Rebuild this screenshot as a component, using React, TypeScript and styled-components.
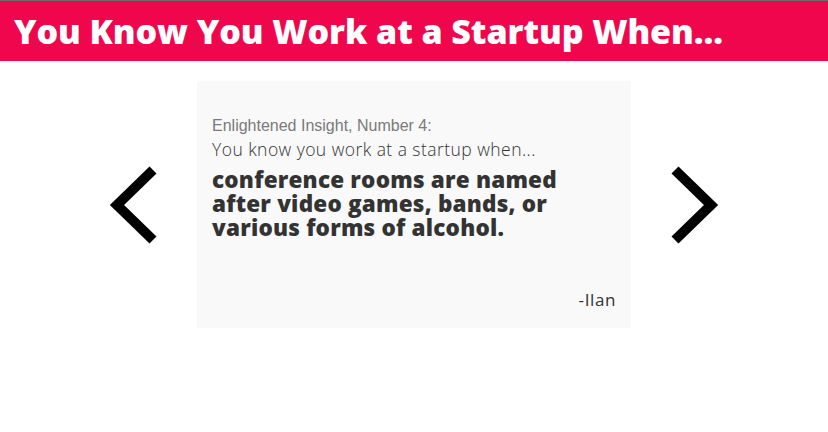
import React from "react";
import styled, { createGlobalStyle } from "styled-components";

const Global = createGlobalStyle`
  html, body { margin: 0; padding: 0; background: #ffffff; }
  body { font-family: "Liberation Sans", Arial, sans-serif; }
`;

const Page = styled.div`
  width: 828px;
  min-height: 432px;
  background: #ffffff;
`;

const Header = styled.header`
  border-top: 1px solid #6b6b6b;
  background: #f0064d;
  height: 60px;
  display: flex;
  align-items: center;
  padding-left: 14px;
`;

const Title = styled.h1`
  margin: 0;
  color: #ffffff;
  font-family: "Open Sans", Lato, sans-serif;
  font-weight: 800;
  font-size: 34px;
  letter-spacing: -0.08px;
  line-height: 1;
`;

const Stage = styled.main`
  display: flex;
  justify-content: center;
  align-items: center;
  gap: 40px;
  padding-top: 20px;
`;

const Arrow = styled.button`
  border: 0;
  background: none;
  padding: 0;
  width: 48px;
  height: 78px;
  display: block;
  cursor: pointer;
  svg { display: block; }
`;

const Card = styled.article`
  box-sizing: border-box;
  width: 434px;
  height: 247px;
  background: #f9f9f9;
  padding: 35px 15px 0;
  display: flex;
  flex-direction: column;
`;

const Kicker = styled.div`
  font-family: "Liberation Sans", Arial, sans-serif;
  font-size: 16px;
  color: #7a7a7a;
  line-height: 20px;
`;

const Lead = styled.div`
  font-family: "Open Sans", Lato, sans-serif;
  font-weight: 300;
  font-size: 17.5px;
  letter-spacing: 0.45px;
  color: #333333;
  line-height: 22px;
  margin-top: 2px;
`;

const Quote = styled.p`
  margin: 8px 0 0;
  font-family: "Open Sans", Lato, sans-serif;
  font-weight: 800;
  font-size: 22.5px;
  letter-spacing: 0.2px;
  color: #333333;
  line-height: 24px;
  max-width: 370px;
`;

const Author = styled.div`
  margin-top: auto;
  margin-bottom: 17px;
  align-self: flex-end;
  font-family: "Open Sans", Lato, sans-serif;
  font-weight: 400;
  font-size: 17px;
  letter-spacing: 0.6px;
  color: #333333;
`;

const Chevron = ({ dir }: { dir: "left" | "right" }) => (
  <svg width="48" height="78" viewBox="0 0 48 78">
    <polyline
      points={dir === "left" ? "44,4 8,39 44,74" : "4,4 40,39 4,74"}
      fill="none"
      stroke="#000"
      strokeWidth="10"
      strokeLinejoin="miter"
    />
  </svg>
);

export default function App() {
  return (
    <Page>
      <Global />
      <Header>
        <Title>You Know You Work at a Startup When...</Title>
      </Header>
      <Stage>
        <Arrow aria-label="Previous">
          <Chevron dir="left" />
        </Arrow>
        <Card>
          <Kicker>Enlightened Insight, Number 4:</Kicker>
          <Lead>You know you work at a startup when...</Lead>
          <Quote>
            conference rooms are named after video games, bands, or various forms of alcohol.
          </Quote>
          <Author>-Ilan</Author>
        </Card>
        <Arrow aria-label="Next">
          <Chevron dir="right" />
        </Arrow>
      </Stage>
    </Page>
  );
}
